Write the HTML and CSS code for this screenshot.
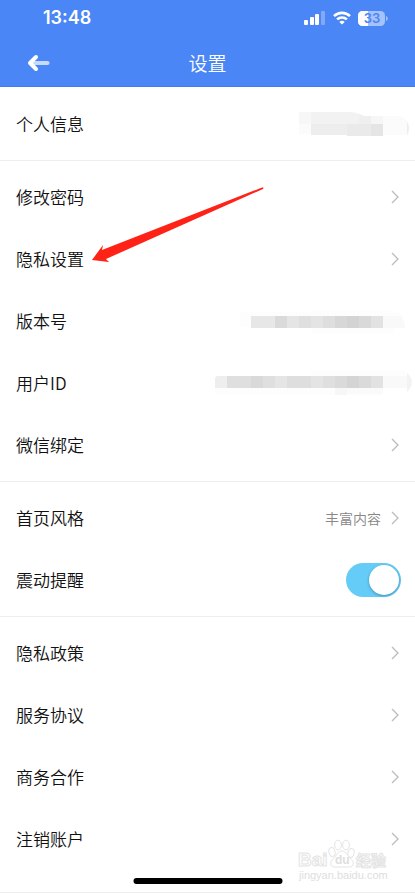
FILE: index.html
```html
<!DOCTYPE html>
<html lang="zh-CN">
<head>
<meta charset="utf-8">
<meta name="viewport" content="width=device-width, initial-scale=1">
<title>设置</title>
<link rel="stylesheet" href="styles.css">
</head>
<body>
<div class="app">
  <header class="header">
    <div class="status">
      <span class="time">13:48</span>
      <div class="indicators">
        <svg class="signal" width="22" height="14" viewBox="0 0 22 14" fill="#fff" aria-hidden="true">
          <rect x="0" y="9" width="4" height="5" rx="1"/>
          <rect x="6" y="6" width="4" height="8" rx="1"/>
          <rect x="11" y="3" width="4" height="11" rx="1"/>
          <rect x="17" y="0" width="4" height="14" rx="1" opacity=".3"/>
        </svg>
        <svg class="wifi" width="18" height="14" viewBox="0 0 18 14" fill="none" stroke="#fff" stroke-width="2.6" aria-hidden="true">
          <path d="M1 5.1C5.5.8 12.5.8 17 5.1"/>
          <path d="M4.1 8.400c2.800-2.600 7-2.600 9.800 0"/>
          <path d="M9 13.600 6.300 10.900c1.500-1.400 3.900-1.400 5.400 0z" fill="#fff" stroke="none"/>
        </svg>
        <svg class="battery" width="30" height="15" viewBox="0 0 30 15" aria-hidden="true">
          <rect width="27" height="15" rx="4.5" fill="#a5c3fa"/>
          <path d="M4.500 0H10V15H4.500A4.500 4.500 0 0 1 0 10.500V4.500A4.500 4.500 0 0 1 4.500 0z" fill="#fff"/>
          <path d="M28 5c2.400.8 2.400 4.200 0 5z" fill="#a5c3fa"/>
          <text class="charge" x="14" y="12" text-anchor="middle">33</text>
        </svg>
      </div>
    </div>
    <div class="nav">
      <button class="back" type="button" aria-label="返回">
        <svg width="24" height="18" viewBox="0 0 24 18" fill="none" stroke-linecap="round" stroke-linejoin="round" aria-hidden="true">
          <path d="M8 9H21.500" stroke="#c8dafc" stroke-width="4.200"/>
          <path d="M10 3 4 9l6 6" stroke="#fff" stroke-width="4"/>
        </svg>
      </button>
      <h1 class="title">设置</h1>
    </div>
  </header>

  <main>
    <section class="group">
      <div class="row">
        <span>个人信息</span>
        <svg class="mosaic" width="200" height="32" viewBox="215 108 200 32" aria-hidden="true">
          <path d="M299 112h48q10 0 18 4h32q12 1 12 12t-3 7H311v-1H299z" fill="#fbfbfb"/>
          <path d="M299 112h12v12h-12z" fill="#f7f7f7"/>
          <path d="M311 112h36q8 0 12 2v10h-48z" fill="#f2f2f2"/>
          <path d="M359 114l5 2h7v8h-12z" fill="#efefef"/>
          <path d="M371 116h12v8h-12z" fill="#f6f6f6"/>
          <path d="M311 124h36v11h-36z" fill="#ededed"/>
          <path d="M347 124h24v12h-24z" fill="#eaeaea"/>
          <path d="M371 124h12v12h-12z" fill="#e5e5e5"/>
          <path d="M407 122q4 6 0 13z" fill="#e6f0f3"/>
        </svg>
      </div>
    </section>

    <section class="group">
      <a class="row" href="#password"><span>修改密码</span><svg class="chevron" viewBox="0 0 8 14"><path d="M1 1l6 6-6 6"/></svg></a>
      <a class="row" href="#privacy"><span>隐私设置</span><svg class="chevron" viewBox="0 0 8 14"><path d="M1 1l6 6-6 6"/></svg>
        <svg class="pointer" width="176" height="78" viewBox="0 0 176 78" aria-hidden="true"><path d="M1 74 12 59 11 64 171 1.500q2.500-.5 1 1.500L15 73l3 3z" fill="#ff2216"/></svg>
      </a>
      <div class="row">
        <span>版本号</span>
        <svg class="mosaic" width="200" height="32" viewBox="215 306 200 32" aria-hidden="true">
          <path d="M240 313h72v-1h82q7 1 9 6v10h-9v7h-82v-7h-72z" fill="#fdfdfd"/>
          <path d="M383 317h18q4 5 4 12h-22z" fill="#f9f9f9"/>
          <path d="M251 317h24v12h-24z" fill="#e7e7e7"/>
          <path d="M275 317h12v12h-12z" fill="#dadada"/>
          <path d="M287 317h12v12h-12z" fill="#e5e5e5"/>
          <path d="M299 317h12v12h-12z" fill="#dfdfdf"/>
          <path d="M311 317h12v12h-12z" fill="#e4e4e4"/>
          <path d="M323 317h12v12h-12z" fill="#dedede"/>
          <path d="M335 317h12v12h-12z" fill="#d7d7d7"/>
          <path d="M347 317h12v12h-12z" fill="#d3d3d3"/>
          <path d="M359 317h12v12h-12z" fill="#d9d9d9"/>
          <path d="M371 317h12v12h-12z" fill="#e2e2e2"/>
        </svg>
      </div>
      <div class="row">
        <span>用户ID</span>
        <svg class="mosaic" width="200" height="32" viewBox="215 367 200 32" aria-hidden="true">
          <path d="M215 376h96v-6h90q8 3 8 8v10h-26v7h-72v-1h-96z" fill="#fdfdfd"/>
          <path d="M335 388h12v7h-12z" fill="#f7f7f7"/>
          <path d="M347 388h36v6h-36z" fill="#fafafa"/>
          <path d="M383 376h24v12h-24z" fill="#f9f9f9"/>
          <path d="M407 373q10 9 0 19z" fill="#f3f3f3"/>
          <path d="M217 376h10v12h-12v-10z" fill="#eee"/>
          <path d="M227 376h24v12h-24z" fill="#dfdfdf"/>
          <path d="M251 376h12v12h-12z" fill="#d9d9d9"/>
          <path d="M263 376h12v12h-12z" fill="#dfdfdf"/>
          <path d="M275 376h12v12h-12z" fill="#e5e5e5"/>
          <path d="M287 376h24v12h-24z" fill="#dedede"/>
          <path d="M311 376h12v12h-12z" fill="#e4e4e4"/>
          <path d="M323 376h12v12h-12z" fill="#dfdfdf"/>
          <path d="M335 376h12v12h-12z" fill="#dadada"/>
          <path d="M347 376h12v12h-12z" fill="#d4d4d4"/>
          <path d="M359 376h12v12h-12z" fill="#dadada"/>
          <path d="M371 376h12v12h-12z" fill="#e2e2e2"/>
        </svg>
      </div>
      <a class="row" href="#wechat"><span>微信绑定</span><svg class="chevron" viewBox="0 0 8 14"><path d="M1 1l6 6-6 6"/></svg></a>
    </section>

    <section class="group">
      <a class="row" href="#style"><span>首页风格</span><span class="value">丰富内容</span><svg class="chevron" viewBox="0 0 8 14"><path d="M1 1l6 6-6 6"/></svg></a>
      <div class="row">
        <label for="vibrate">震动提醒</label>
        <input class="switch" id="vibrate" type="checkbox" role="switch" checked>
      </div>
    </section>

    <section class="group last">
      <a class="row" href="#policy"><span>隐私政策</span><svg class="chevron" viewBox="0 0 8 14"><path d="M1 1l6 6-6 6"/></svg></a>
      <a class="row" href="#terms"><span>服务协议</span><svg class="chevron" viewBox="0 0 8 14"><path d="M1 1l6 6-6 6"/></svg></a>
      <a class="row" href="#business"><span>商务合作</span><svg class="chevron" viewBox="0 0 8 14"><path d="M1 1l6 6-6 6"/></svg></a>
      <a class="row" href="#cancel"><span>注销账户</span><svg class="chevron" viewBox="0 0 8 14"><path d="M1 1l6 6-6 6"/></svg></a>
    </section>
  </main>

  <svg class="watermark" width="96" height="46" viewBox="0 0 96 46" aria-hidden="true">
    <g fill="#fff" stroke="#e4e4e4">
      <text class="brand" x="3" y="27">Bai</text>
      <ellipse cx="37" cy="13" rx="3" ry="4.500" transform="rotate(-15 37 13)"/>
      <ellipse cx="43" cy="6" rx="3.400" ry="4.800"/>
      <ellipse cx="51" cy="6" rx="3.400" ry="4.800"/>
      <ellipse cx="56" cy="14" rx="3" ry="4.500" transform="rotate(15 56 14)"/>
      <path d="M47 12c-4 0-5 4-8 7-5 4-4 9 1 9h14c5 0 6-5 1-9-3-3-4-7-8-7z"/>
      <text class="cn" x="61" y="27">经验</text>
    </g>
    <g fill="#dedede">
      <text class="du" x="40" y="25">du</text>
      <text class="site" x="4" y="40">jingyan.baidu.com</text>
    </g>
  </svg>
  <div class="home-bar"></div>
</div>
</body>
</html>
```
FILE: styles.css
```css
* {
  box-sizing: border-box;
}

body {
  margin: 0;
  background: #fff;
  color: #111;
  font-family: "Noto Sans CJK SC", sans-serif;
  font-size: 17px;
  font-weight: 350;
  line-height: 24px;
}

.app {
  position: relative;
  overflow: hidden;
}

.header {
  background: #4a86f5;
  border-bottom: 1px solid #3f7ce8;
  color: #fff;
}

.status {
  display: flex;
  align-items: center;
  justify-content: space-between;
  height: 36px;
  padding: 0 27px 0 43px;
}

.time {
  font-family: Inter, sans-serif;
  font-size: 18px;
  font-weight: 600;
}

.indicators {
  display: flex;
  align-items: center;
  gap: 7px;
}

.charge {
  font-family: Inter, sans-serif;
  font-size: 13px;
  font-weight: 600;
  fill: #4a86f5;
}

.nav {
  display: grid;
  grid-template-columns: 1fr auto 1fr;
  align-items: center;
  height: 50px;
  padding: 4px 16px 0;
}

.back {
  display: flex;
  width: 44px;
  height: 44px;
  align-items: center;
  padding: 0 0 0 10px;
  border: 0;
  background: none;
}

.title {
  margin: 0;
  font-size: 19px;
  font-weight: 350;
}

.group {
  padding: 5px 0;
  border-bottom: 1px solid #eee;
}

.group:first-child {
  padding-top: 6px;
}

.last {
  padding-bottom: 22px;
}

.row {
  position: relative;
  display: flex;
  align-items: center;
  justify-content: space-between;
  height: 62px;
  padding: 0 16px;
  color: inherit;
  text-decoration: none;
}

.value {
  margin: 0 10px 0 auto;
  color: #888;
  font-size: 14px;
}

.chevron {
  width: 8px;
  height: 14px;
  fill: none;
  stroke: #bbb;
  stroke-width: 1.3;
}

.mosaic {
  margin-right: -16px;
}

.pointer {
  position: absolute;
  left: 91px;
  bottom: 26px;
  z-index: 1;
}

.switch {
  appearance: none;
  width: 55px;
  height: 34px;
  margin: 0 -2px 0 0;
  padding: 2px;
  border-radius: 17px;
  background: #65cbf7;
}

.switch::before {
  content: "";
  display: block;
  width: 30px;
  height: 30px;
  border-radius: 50%;
  background: #fff;
  box-shadow: 0 1px 3px rgba(0, 60, 100, 0.4);
}

.switch:checked::before {
  margin-left: auto;
}

.watermark {
  position: absolute;
  right: 24px;
  bottom: 8px;
  pointer-events: none;
}

.brand,
.du,
.site {
  font-family: "Liberation Sans", sans-serif;
  font-weight: 700;
}

.brand {
  font-size: 19px;
}

.du {
  font-size: 12px;
}

.cn {
  font-size: 15px;
  font-weight: 700;
}

.site {
  font-size: 11px;
  font-weight: 400;
}

.home-bar {
  position: absolute;
  bottom: 9px;
  left: 50%;
  width: 149px;
  height: 6px;
  border-radius: 3px;
  background: #000;
  transform: translateX(-50%);
}
```
